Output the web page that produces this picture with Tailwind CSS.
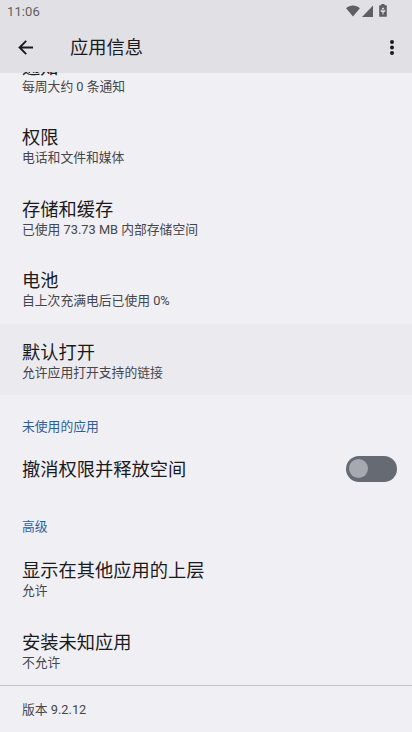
<!DOCTYPE html>
<html lang="zh-CN">
<head>
<meta charset="utf-8">
<meta name="viewport" content="width=device-width, initial-scale=1">
<title>应用信息</title>
<script src="https://cdn.jsdelivr.net/npm/@tailwindcss/browser@4"></script>
</head>
<body class="w-[412px] h-[732px] overflow-hidden bg-[#f0eff4] font-[Roboto,'Noto_Sans_CJK_SC',sans-serif] text-[#1b1b1e] flex flex-col">
  <header class="h-[73px] shrink-0 bg-[#e1e0e4] flex flex-col">
    <div class="h-[23px] shrink-0 flex items-center justify-between pl-[7px] pr-[25.5px] text-[#5f5f62]">
      <span class="text-[13px] leading-[23px] tracking-[0.1px]">11:06</span>
      <div class="flex items-center -mt-[1.5px]">
        <svg class="w-[14px] h-[12px]" viewBox="0 0 14 12" fill="currentColor"><path d="M7 11.6 0.1 3.3C4-0.4 10-0.4 13.9 3.3Z"/></svg>
        <svg class="w-[11px] h-[12px] ml-[1.5px]" viewBox="0 0 11 12" fill="currentColor"><path d="M11 .5V12H0Z"/></svg>
        <svg class="w-[8px] h-[13px] ml-[6px] mb-px" viewBox="0 0 8 13" fill="currentColor"><path fill-rule="evenodd" d="M2.3 0h3.2v1.3h1.7q.6 0 .6.6v10.3q0 .6-.6.6H.8q-.6 0-.6-.6V1.9q0-.6.6-.6h1.5ZM4 3.2 2.6 5H3.5V6.8H2.7V5.7H1.8V7.6L3.5 8.4V10.4H4.5V8.4L6.2 7.6V5.7H5.3V6.8H4.5V5H5.4Z"/></svg>
      </div>
    </div>
    <div class="h-[50px] flex items-center pl-[18px] pr-[18px]">
      <svg class="w-[16px] h-[16px]" viewBox="0 0 16 16" fill="none" stroke="#1b1b1e" stroke-width="1.9"><path d="M15 7.5H2M8.2 .9 1.6 7.5l6.6 6.6"/></svg>
      <h1 class="ml-[36px] text-[18.25px] leading-[24px]">应用信息</h1>
      <svg class="w-[4px] h-[16px] ml-auto" viewBox="0 0 4 16" fill="#1b1b1e"><circle cx="2" cy="2" r="2"/><circle cx="2" cy="7.5" r="2"/><circle cx="2" cy="13" r="2"/></svg>
    </div>
  </header>

  <div class="relative z-10 -mt-px flex-1 overflow-hidden">
  <main class="-mt-[33.6px]">
    <section class="h-[71.4px] px-[22px] pt-[18.1px]">
      <h2 class="text-[18.25px] leading-[21px]">通知</h2>
      <p class="text-[12.8px] leading-[18px] text-[#46464b]">每周大约 0 条通知</p>
    </section>
    <section class="h-[71.4px] px-[22px] pt-[17.6px]">
      <h2 class="text-[18.25px] leading-[21px]">权限</h2>
      <p class="text-[12.8px] leading-[19.8px] text-[#46464b]">电话和文件和媒体</p>
    </section>
    <section class="h-[71.4px] px-[22px] pt-[17.6px]">
      <h2 class="text-[18.25px] leading-[21px]">存储和缓存</h2>
      <p class="text-[12.8px] leading-[19.8px] text-[#46464b]">已使用 73.73 MB 内部存储空间</p>
    </section>
    <section class="h-[71.4px] px-[22px] pt-[17.6px]">
      <h2 class="text-[18.25px] leading-[21px]">电池</h2>
      <p class="text-[12.8px] leading-[19.8px] text-[#46464b]">自上次充满电后已使用 0%</p>
    </section>
    <section class="h-[71.4px] px-[22px] pt-[17.6px] bg-[#ebeaef]">
      <h2 class="text-[18.25px] leading-[21px]">默认打开</h2>
      <p class="text-[12.8px] leading-[19.8px] text-[#46464b]">允许应用打开支持的链接</p>
    </section>

    <h3 class="h-[46.6px] px-[22px] pt-[21.6px] text-[12.8px] leading-[19px] text-[#2a609c]">未使用的应用</h3>
    <section class="h-[54px] pl-[22px] pr-[15px] flex items-center justify-between">
      <h2 class="pt-[2px] text-[18.25px] leading-[22px]">撤消权限并释放空间</h2>
      <div class="w-[51px] h-[26px] rounded-full bg-[#666a72] flex items-center pl-[3px]">
        <div class="w-[19px] h-[19px] rounded-full bg-[#a7a9b1]"></div>
      </div>
    </section>
    <h3 class="h-[46.6px] px-[22px] pt-[21.4px] text-[12.8px] leading-[19px] text-[#2a609c]">高级</h3>
    <section class="h-[71.4px] px-[22px] pt-[17.6px]">
      <h2 class="text-[18.25px] leading-[21px]">显示在其他应用的上层</h2>
      <p class="text-[12.8px] leading-[19px] text-[#46464b]">允许</p>
    </section>
    <section class="h-[71.4px] px-[22px] pt-[17.6px]">
      <h2 class="text-[18.25px] leading-[21px]">安装未知应用</h2>
      <p class="text-[12.8px] leading-[19px] text-[#46464b]">不允许</p>
    </section>
    <footer class="border-t border-[#c6c5ca] px-[22px] pt-[14px]">
      <p class="text-[12.8px] leading-[19px] text-[#46464b]">版本 9.2.12</p>
    </footer>
  </main>
  </div>
</body>
</html>
